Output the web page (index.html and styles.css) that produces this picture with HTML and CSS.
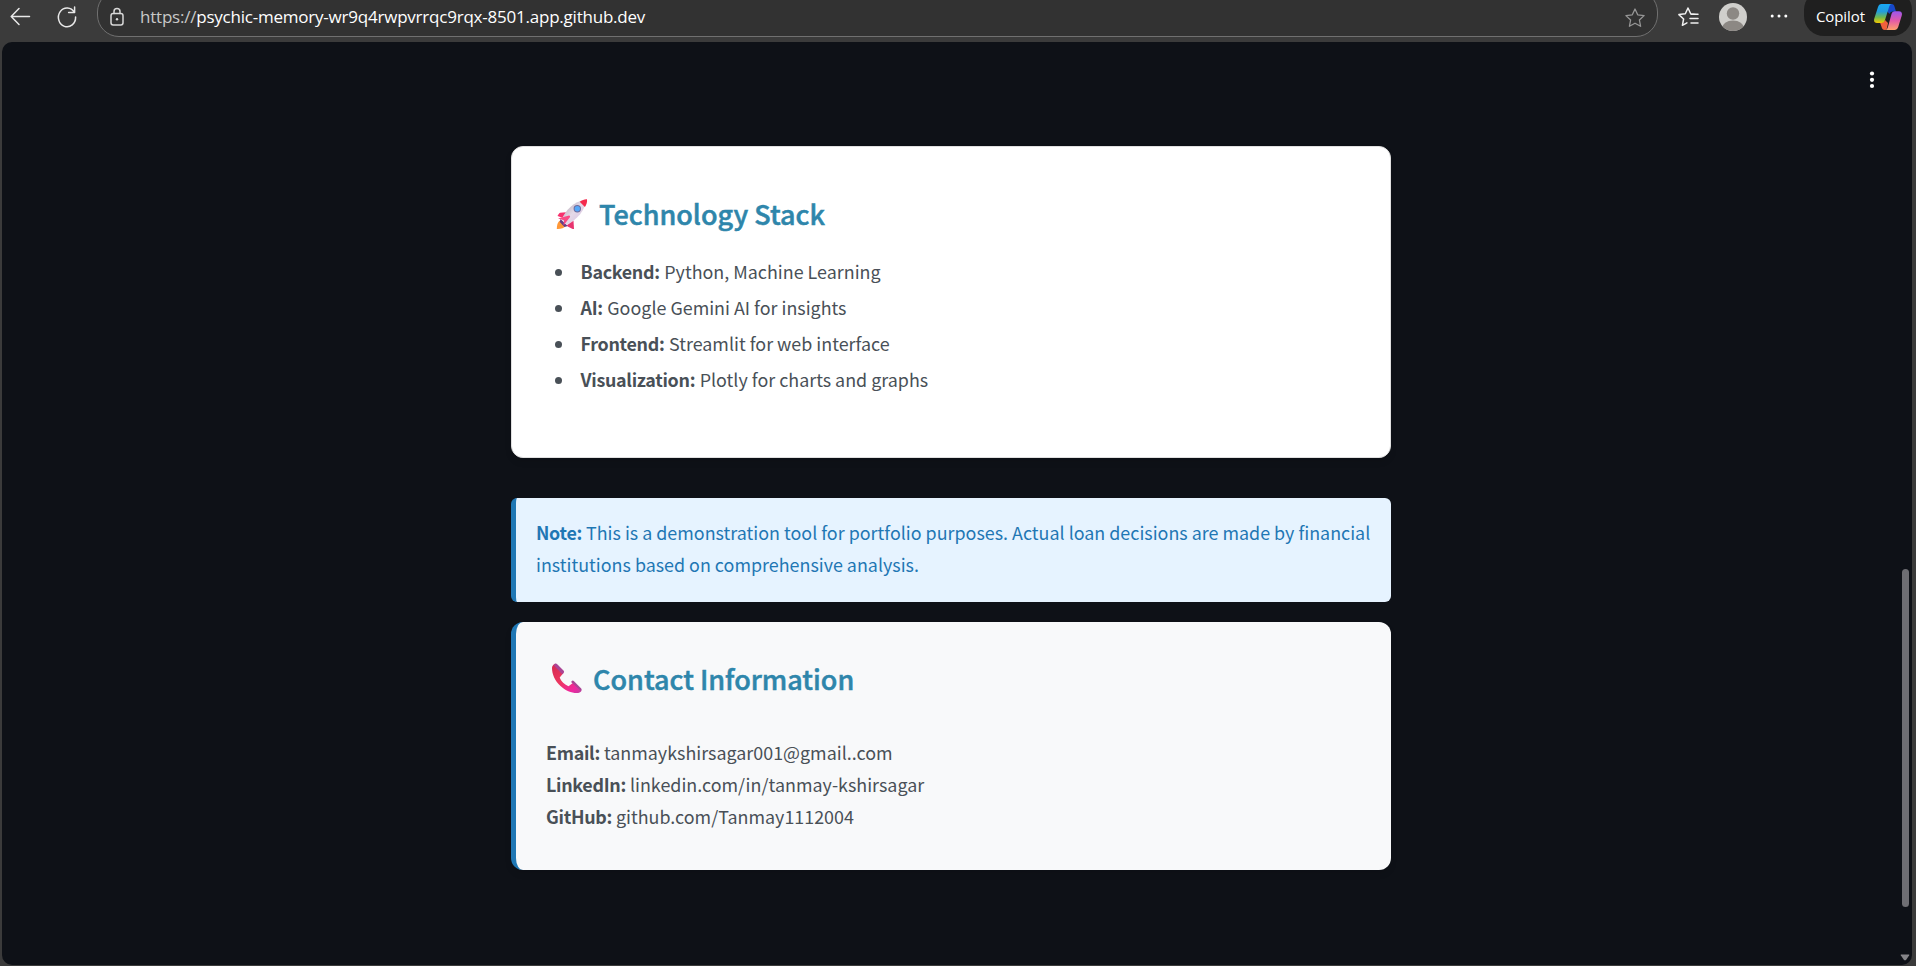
FILE: index.html
```html
<!DOCTYPE html>
<html lang="en">
<head>
<meta charset="utf-8">
<title>Loan Tool</title>
<link rel="stylesheet" href="styles.css">
</head>
<body>
<header class="toolbar">
  <svg class="back" width="22" height="22" viewBox="0 0 22 22"><path d="M9 2.500 1.200 10.500 9 18.500M1.500 10.500H19.500"/></svg>
  <svg class="reload" width="22" height="24" viewBox="0 0 22 24"><path d="M18.300 7.400A8.600 9.400 0 1 0 19.600 12M18.600 2v5.600h-6"/></svg>
  <div class="address">
    <svg class="lock" width="16" height="20" viewBox="0 0 16 20"><rect x="2" y="6.500" width="12" height="11.500" rx="2.200"/><path d="M5 6.500V4.500a3 3 0 0 1 6 0v2"/><circle class="dot" cx="8" cy="12.300" r="1.200"/></svg>
    <span class="url"><span class="scheme">https://</span>psychic-memory-wr9q4rwpvrrqc9rqx-8501.app.github.dev</span>
    <svg class="star" width="22" height="22" viewBox="0 0 22 22"><path d="m11 2 2.700 5.800 6.400.8-4.700 4.400 1.200 6.300-5.600-3.100-5.600 3.100L6.600 13 1.900 8.600l6.400-.8z"/></svg>
  </div>
  <svg class="favorites" width="22" height="22" viewBox="0 0 22 22"><path d="m19 8.300-5.300-.6L11 2 8.300 7.800l-6.400.8L6.600 13l-1.200 6.300 4.500-2.400M14 8.300h7M13 12.600h8M14 16.900h7"/></svg>
  <svg class="avatar" width="28" height="28" viewBox="0 0 28 28"><defs><clipPath id="face"><circle cx="14" cy="14" r="14"/></clipPath></defs><g clip-path="url(#face)"><rect width="28" height="28" fill="#d0cfcc"/><circle cx="14" cy="10.500" r="6.200" fill="#8c8884"/><ellipse cx="14" cy="25.500" rx="11" ry="8" fill="#8c8884"/></g></svg>
  <svg class="more" width="18" height="4" viewBox="0 0 18 4"><circle cx="2.200" cy="2" r="1.500"/><circle cx="9" cy="2" r="1.500"/><circle cx="15.800" cy="2" r="1.500"/></svg>
  <div class="copilot"><span class="copilot-label">Copilot</span>
    <svg width="28" height="26" viewBox="0 0 28 26">
      <defs>
        <linearGradient id="ga" x1="0" y1="0" x2="0" y2="1"><stop offset="0" stop-color="#18a8f5"/><stop offset=".4" stop-color="#239ddb"/><stop offset=".7" stop-color="#6fb94f"/><stop offset="1" stop-color="#f4c800"/></linearGradient>
        <linearGradient id="gb" x1="0" y1="0" x2="0" y2="1"><stop offset="0" stop-color="#9b56f0"/><stop offset=".5" stop-color="#e35aa8"/><stop offset="1" stop-color="#ffa06b"/></linearGradient>
      </defs>
      <path fill="#1748c9" d="M14 0h3.500c2 0 2.600 1.200 3.200 3.200L22 7.500h-3c-2 0-3 1-3.600 2.500L13 7z"/>
      <path fill="#f2603c" d="M6 18.500h1.300c2 0 3-.8 3.700-2.500l3 3-1 5c-.4 1.300-.5 2-2 2-2.500 0-3-1.500-3.500-3.200z"/>
      <path fill="url(#ga)" d="M7.500 0H18c-1.800 0-2.500 1.500-3 3.200L11 16c-.6 2-1.700 3-3.700 3H3c-2.500 0-3.500-1.800-2.700-4.500L4 3C4.700 1 5.700 0 7.500 0z"/>
      <path fill="url(#gb)" d="M20.800 7.200H25c2.500 0 3.500 1.800 2.700 4.500L24.200 23c-.7 2-2 3-3.700 3H11c1.800 0 2.500-1.500 3-3.200L17.500 10c.6-1.800 1.600-2.800 3.300-2.800z"/>
    </svg>
  </div>
</header>
<main class="page">
  <div class="column">
    <section class="card stack">
      <h3 class="title"><svg class="emoji" width="32" height="32" viewBox="0 0 32 32">
        <defs><linearGradient id="body" x1="0" y1="0" x2="1" y2="1"><stop offset="0.2" stop-color="#bdb2bd"/><stop offset=".5" stop-color="#e5dae8"/><stop offset="1" stop-color="#d4bce0"/></linearGradient></defs>
        <path fill="#ff9838" d="M4 22.500c-2.500 1.500-3.200 5-3.200 8.500 3.800.2 7.500-.8 9.500-3.800z"/>
        <path fill="#643f86" d="m4.500 21 7.500 7-3.500 1L3.700 24z"/>
        <path fill="#f7316d" d="m10 14.200-6 .5c-.8.200-2.300 2.500-2.400 3.300l5.200 2z"/>
        <path fill="url(#body)" d="M5.500 21.500C10 12 17.500 3.500 29.500 1.700 30 12 21 21.500 10.500 27z"/>
        <path fill="#f42a4d" d="M23.700 3.800C26 2.200 29 1 31 1.300c.5 2.500-.6 5.600-2.100 7.800z"/>
        <path fill="#fa4b85" d="M2 20.500 13 17.500c1 .1 1.400.9.900 1.800L7.500 27.500 8 22.300z"/>
        <path fill="#e8356f" d="m17.500 22.800.5 8.200c-1 .6-5.500-2-7.500-3.500z"/>
        <circle cx="21.300" cy="10.700" r="3.700" fill="#6b6a9b"/><circle cx="21.300" cy="10.700" r="2.700" fill="#56a7f7"/>
      </svg><span class="title-text">Technology Stack</span></h3>
      <ul class="list">
        <li><b>Backend:</b> Python, Machine Learning</li>
        <li><b>AI:</b> Google Gemini AI for insights</li>
        <li><b>Frontend:</b> Streamlit for web interface</li>
        <li><b>Visualization:</b> Plotly for charts and graphs</li>
      </ul>
    </section>
    <section class="note"><b>Note:</b> This is a demonstration tool for portfolio purposes. Actual loan decisions are made by financial<br>institutions based on comprehensive analysis.</section>
    <section class="card contact">
      <h3 class="title"><svg class="emoji" width="32" height="32" viewBox="0 0 32 32">
        <defs><linearGradient id="phone" x1="0" y1="0" x2="1" y2="1"><stop offset="0" stop-color="#d52950"/><stop offset=".45" stop-color="#ed3760"/><stop offset=".8" stop-color="#f027a0"/><stop offset="1" stop-color="#bd42a0"/></linearGradient></defs>
        <path fill="url(#phone)" d="M3.500 1C2 2 1 3 1 5c0 6 3 13 8.500 18 5 4.800 12 7.500 17.500 7 1.700-.2 2.500-.8 3.500-2.200l-8-8.300-5 3.700C14 22 9.800 18 8.700 14.500L12.500 10z"/>
        <path fill="#aa4595" d="M3.500 1C4.500.3 5.500.5 6.500 1.500l6 6c.8.900.8 1.700 0 2.500l-1.200 1.200L2.700 2.300zM20.500 18.200c1-.8 1.700-.8 2.500 0l7 7c.9.9.9 1.700 0 2.800l-9.700-8.800z"/>
      </svg><span class="title-text">Contact Information</span></h3>
      <p class="details"><b>Email:</b> tanmaykshirsagar001@gmail..com<br><b>LinkedIn:</b> linkedin.com/in/tanmay-kshirsagar<br><b>GitHub:</b> github.com/Tanmay1112004</p>
    </section>
  </div>
  <svg class="menu" width="6" height="18" viewBox="0 0 6 18"><circle cx="3" cy="2.500" r="2.100"/><circle cx="3" cy="8.800" r="2.100"/><circle cx="3" cy="15" r="2.100"/></svg>
  <div class="thumb"></div>
  <svg class="arrow" width="10" height="7" viewBox="0 0 10 7"><path d="M1 .5h8q.5.200.2.800L6.200 5.800q-1.200 1-2.400 0L.8 1.300Q.5.700 1 .5z"/></svg>
</main>
</body>
</html>
```
FILE: styles.css
```css
* { box-sizing: border-box; }
body {
  margin: 0;
  width: 1916px;
  height: 966px;
  overflow: hidden;
  display: flex;
  flex-direction: column;
  background: #3b3b3b;
  font-family: "Noto Sans CJK SC", "Open Sans", sans-serif;
}
svg { display: block; flex: none; }
b { font-weight: 700; letter-spacing: -0.3px; }

.toolbar {
  height: 42px;
  display: flex;
  align-items: flex-start;
  color: #fff;
  font-family: "Open Sans", "Noto Sans", sans-serif;
}
.toolbar svg { fill: none; stroke-linecap: round; stroke-linejoin: round; }
.back, .reload { stroke: #e8e8e8; stroke-width: 1.5; }
.back { margin: 6px 0 0 10px; }
.toolbar .reload { margin: 5px 0 0 24px; }
.address {
  width: 1561px;
  height: 47px;
  margin: -10px 0 0 19px;
  padding: 10px 11px 0 11px;
  display: flex;
  align-items: flex-start;
  flex: none;
  background: #323232;
  border: 1.500px solid #707070;
  border-radius: 22px;
}
.lock { margin: 6px 0 0 0; stroke: #d8d8d8; stroke-width: 1.5; }
.toolbar .lock .dot { fill: #d8d8d8; stroke: none; }
.url {
  flex: 1;
  margin-left: 15px;
  font-size: 17px;
  line-height: 32px;
  letter-spacing: -0.22px;
  white-space: nowrap;
}
.scheme { color: #c8c8c8; }
.star { margin-top: 6px; stroke: #969696; stroke-width: 1.3; }
.favorites { margin: 6px 0 0 19px; stroke: #f0f0f0; stroke-width: 1.5; }
.avatar { margin: 3px 0 0 20px; }
.toolbar .more { margin: 14px 0 0 23px; fill: #fff; }
.copilot {
  width: 108px;
  height: 46px;
  margin: -10px 0 0 16px;
  padding: 14px 10px 0 12px;
  display: flex;
  flex: none;
  justify-content: space-between;
  background: #1f1f1f;
  border-radius: 20px;
}
.copilot-label { font-size: 15px; line-height: 25px; letter-spacing: -0.1px; }

.page {
  position: relative;
  width: 1910px;
  height: 923px;
  margin-left: 2px;
  padding-top: 104px;
  background: #0e1117;
  border-radius: 10px;
}
.column { width: 880px; margin-left: 509px; }
.card { border-radius: 12px; box-shadow: 0 4px 6px rgba(0, 0, 0, 0.1); }
.stack {
  height: 312px;
  padding: 43px 40px 0 44px;
  background: #fff;
  border: 1px solid #e0e0e0;
}
.title {
  margin: 0;
  display: flex;
  align-items: center;
  height: 48px;
  color: #2e86ab;
  font-size: 27px;
  font-weight: 500;
  line-height: 48px;
  -webkit-text-stroke: 0.5px #2e86ab;
}
.title-text { margin-left: 11px; white-space: nowrap; }
.list {
  margin: 15px 0 0;
  padding-left: 25px;
  list-style: none;
  color: #495057;
  font-size: 17.900px;
  line-height: 36px;
}
.list li { display: flex; gap: 4.500px; white-space: nowrap; }
.list li::before {
  content: "";
  width: 7px;
  height: 7px;
  margin: 16px 14px 0 -26px;
  border-radius: 50%;
  background: #495057;
}
.note {
  height: 104px;
  margin-top: 40px;
  padding: 18px 0 0 20px;
  background: #e6f3ff;
  border-left: 5px solid #1f77b4;
  border-radius: 6px;
  color: #1f77b4;
  font-size: 17.900px;
  line-height: 32px;
  white-space: nowrap;
}
.contact {
  height: 248px;
  margin-top: 20px;
  padding: 33px 25px 0 30px;
  background: #f8f9fa;
  border-left: 5px solid #1f77b4;
}
.details {
  margin: 33px 0 0;
  color: #495057;
  font-size: 17.900px;
  line-height: 32px;
}
.contact .title { padding-left: 5px; }
.contact .title-text { margin-left: 10px; }
.menu { position: absolute; top: 29px; right: 37px; fill: #fff; }
.thumb {
  position: absolute;
  top: 527px;
  right: 3px;
  width: 7px;
  height: 338px;
  border-radius: 4px;
  background: #6e6e73;
}
.arrow { position: absolute; right: 2px; bottom: 4px; fill: #858589; }
```
